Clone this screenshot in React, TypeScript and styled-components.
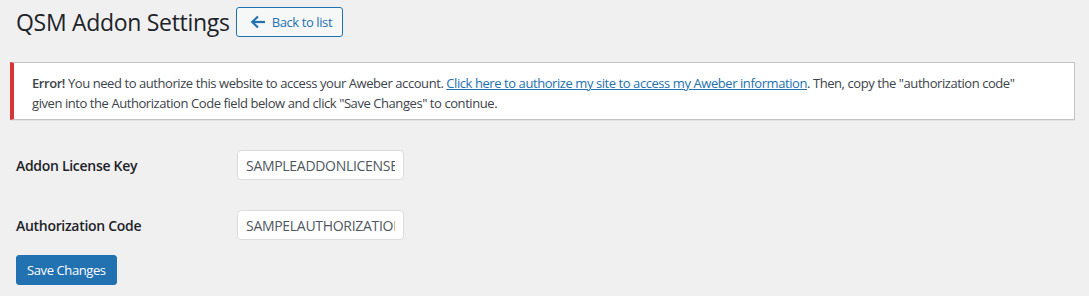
import React from 'react'
import styled, { createGlobalStyle } from 'styled-components'

const GlobalStyle = createGlobalStyle`
  html, body {
    margin: 0;
    padding: 0;
    background: #f0f0f1;
  }
  body {
    font-family: "Segoe UI", "Open Sans", "Noto Sans", sans-serif;
    color: #3c434a;
    font-size: 13px;
  }
`

const Wrap = styled.div`
  padding: 0 14px 0 10px;
`

const Header = styled.div`
  display: flex;
  align-items: center;
  gap: 6px;
  padding: 7px 0 0 6px;
  height: 30px;
`

const Title = styled.h1`
  margin: 0;
  font-size: 23px;
  font-weight: 400;
  line-height: 30px;
  letter-spacing: -0.3px;
  color: #1d2327;
`

const BackButton = styled.a`
  display: inline-flex;
  align-items: center;
  gap: 6px;
  box-sizing: border-box;
  height: 30px;
  padding: 0 10px 0 13px;
  border: 1px solid #2271b1;
  border-radius: 3px;
  background: #f6f7f7;
  color: #2271b1;
  font-size: 13px;
  letter-spacing: -0.4px;
  text-decoration: none;
`

const Notice = styled.div`
  margin-top: 25px;
  box-sizing: border-box;
  min-height: 57px;
  background: #fff;
  border: 1px solid #c3c4c7;
  border-left: 4px solid #d63638;
  padding: 10px 40px 6px 18px;
  box-shadow: 0 1px 1px rgba(0, 0, 0, 0.04);
`

const NoticeText = styled.p`
  margin: 0;
  font-size: 13px;
  line-height: 20px;
  letter-spacing: -0.43px;
  color: #3c434a;
`

const Strong = styled.strong`
  font-weight: 600;
`

const NoticeLink = styled.a`
  color: #2271b1;
  text-decoration: underline;
`

const FormTable = styled.div`
  margin-top: 15px;
  padding-left: 6px;
`

const Row = styled.div`
  display: grid;
  grid-template-columns: 221px 1fr;
  align-items: center;
  height: 60px;
`

const Label = styled.label`
  font-size: 14px;
  font-weight: 600;
  letter-spacing: -0.3px;
  color: #1d2327;
`

const Input = styled.input`
  box-sizing: border-box;
  width: 167px;
  height: 30px;
  padding: 0 8px;
  border: 1px solid #dcdcde;
  border-radius: 4px;
  background: #fff;
  color: #50575e;
  font-family: inherit;
  font-size: 14px;
  letter-spacing: -0.3px;
  outline: none;
`

const Submit = styled.button`
  margin: 0 0 0 6px;
  box-sizing: border-box;
  height: 30px;
  padding: 0 10px;
  border: 1px solid #2271b1;
  border-radius: 3px;
  background: #2271b1;
  color: #fff;
  font-family: inherit;
  font-size: 13px;
  letter-spacing: -0.4px;
`

const ArrowLeft = () => (
  <svg width="16" height="14" viewBox="0 0 16 14" fill="none">
    <path d="M15 7H3" stroke="#2271b1" strokeWidth="2.2" />
    <path d="M8 1.5L2.2 7L8 12.5" stroke="#2271b1" strokeWidth="2.2" />
  </svg>
)

const App: React.FC = () => {
  return (
    <Wrap>
      <GlobalStyle />
      <Header>
        <Title>QSM Addon Settings</Title>
        <BackButton href="#">
          <ArrowLeft />
          Back to list
        </BackButton>
      </Header>
      <Notice>
        <NoticeText>
          <Strong>Error!</Strong> You need to authorize this website to access your Aweber account.{' '}
          <NoticeLink href="#">Click here to authorize my site to access my Aweber information</NoticeLink>. Then, copy the
          "authorization code" given into the Authorization Code field below and click "Save Changes" to continue.
        </NoticeText>
      </Notice>
      <FormTable>
        <Row>
          <Label>Addon License Key</Label>
          <Input defaultValue="SAMPLEADDONLICENSEKEY" />
        </Row>
        <Row>
          <Label>Authorization Code</Label>
          <Input defaultValue="SAMPELAUTHORIZATIONCODE" />
        </Row>
      </FormTable>
      <Submit>Save Changes</Submit>
    </Wrap>
  )
}

export default App
